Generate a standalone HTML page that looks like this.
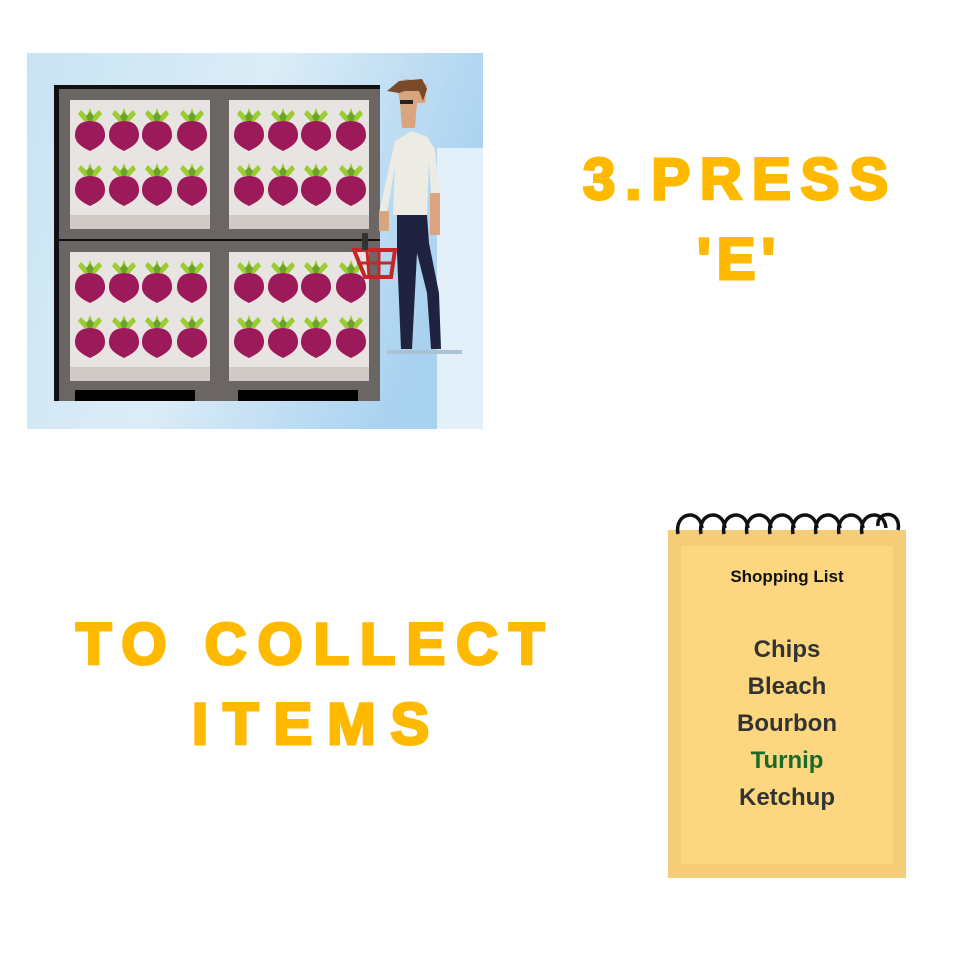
<!DOCTYPE html>
<html><head><meta charset="utf-8"><style>
html,body{margin:0;padding:0;background:#fff;width:961px;height:962px;overflow:hidden;position:relative}
.t{position:absolute;font-family:"Liberation Sans",sans-serif;font-weight:bold;color:#FFBA00;font-size:58px;line-height:58px;white-space:nowrap;-webkit-text-stroke:3px #FFBA00}
.n{position:absolute;font-family:"Liberation Sans",sans-serif;font-weight:bold;color:#333;white-space:nowrap;text-align:center;left:668px;width:238px}
</style></head><body>
<svg style="position:absolute;left:27px;top:53px" width="456" height="376" viewBox="0 0 456 376">
<defs>
<linearGradient id="bg" x1="0" y1="0" x2="1" y2="0.3"><stop offset="0" stop-color="#c8e3f3"/><stop offset="0.5" stop-color="#dcedf7"/><stop offset="1" stop-color="#a9d2f0"/></linearGradient>
<g id="beet"><path d="M-3 -18 L-9 -24 L-12 -20 L-6 -13 L6 -13 L12 -20 L9 -24 L3 -18 L0 -26Z" fill="#9acd32"/><path d="M-4 -18 L0 -22 L4 -18 L2 -13 L-2 -13Z" fill="#6aa52a"/><path d="M0 -13 C-12 -13 -15 -5 -15 1 C-15 9 -8 13 0 17 C8 13 15 9 15 1 C15 -5 12 -13 0 -13Z" fill="#9c1a5a"/></g>
<g id="cell"><rect x="0" y="0" width="162" height="150" fill="#6b6564"/><rect x="11" y="11" width="140" height="129" fill="#e8e4e1"/><rect x="11" y="126" width="140" height="14" fill="#cfcac6"/>
<use href="#beet" x="31" y="45"/><use href="#beet" x="65" y="45"/><use href="#beet" x="98" y="45"/><use href="#beet" x="133" y="45"/>
<use href="#beet" x="31" y="100"/><use href="#beet" x="65" y="100"/><use href="#beet" x="98" y="100"/><use href="#beet" x="133" y="100"/></g>
</defs>
<rect width="456" height="376" fill="url(#bg)"/>
<rect x="410" y="95" width="46" height="281" fill="#e3f0f9"/>
<rect x="27" y="32" width="326" height="316" fill="#111"/>
<use href="#cell" x="32" y="36"/><use href="#cell" x="191" y="36"/>
<use href="#cell" x="32" y="188"/><use href="#cell" x="191" y="188"/>
<rect x="32" y="336" width="162" height="12" fill="#6b6564"/><rect x="191" y="336" width="162" height="12" fill="#6b6564"/>
<rect x="48" y="337" width="120" height="11" fill="#000"/><rect x="211" y="337" width="120" height="11" fill="#000"/>
<rect x="360" y="297" width="75" height="4" fill="#a9c3d3"/>
<path d="M370 33 L378 26 L395 28 L400 32 L398 50 L390 50 L388 75 L375 75 L373 50Z" fill="#d9a57e"/>
<path d="M360 38 L372 28 L395 26 L400 36 L396 48 L392 38 L378 38 L372 40Z" fill="#7a4a2a"/>
<rect x="373" y="47" width="13" height="4" fill="#222"/>
<path d="M368 88 L385 78 L400 84 L408 96 L412 140 L404 140 L402 108 L400 162 L366 162 L368 112 L360 160 L352 160Z" fill="#ecece4"/>
<rect x="352" y="158" width="10" height="20" fill="#d9a57e"/><rect x="403" y="140" width="10" height="42" fill="#d9a57e"/>
<path d="M370 162 L400 162 L402 190 L412 240 L414 296 L404 296 L400 240 L390 200 L385 296 L374 296 L370 200Z" fill="#1f2340"/>
<path d="M327 197 L368 197 L364 224 L338 224Z" fill="none" stroke="#c0282a" stroke-width="4"/>
<path d="M340 197 L342 224 M352 197 L352 224 M330 210 L366 210" stroke="#c0282a" stroke-width="3"/>
<rect x="335" y="180" width="6" height="17" fill="#333"/>
</svg>
<div class="t" style="left:583px;top:151px;letter-spacing:10px">3.PRESS</div>
<div class="t" style="left:697px;top:231px;letter-spacing:6px">'E'</div>
<div class="t" style="left:76px;top:616px;letter-spacing:11px">TO COLLECT</div>
<div class="t" style="left:192px;top:696px;letter-spacing:15px">ITEMS</div>
<div style="position:absolute;left:668px;top:530px;width:238px;height:348px;background:#f5cd78"></div>
<div style="position:absolute;left:681px;top:546px;width:212px;height:318px;background:#fdd780"></div>
<svg style="position:absolute;left:672px;top:506px" width="232" height="34" viewBox="0 0 232 34">
<g fill="none" stroke="#111" stroke-width="3.5">
<path d="M6 28 C2 6 28 2 30 22"/><path d="M29 28 C25 6 51 2 53 22"/><path d="M52 28 C48 6 74 2 76 22"/><path d="M75 28 C71 6 97 2 99 22"/><path d="M98 28 C94 6 120 2 122 22"/><path d="M121 28 C117 6 143 2 145 22"/><path d="M144 28 C140 6 166 2 168 22"/><path d="M167 28 C163 6 189 2 191 22"/><path d="M190 28 C186 6 212 2 214 22"/><path d="M206 20 C204 4 230 4 226 24"/>
</g></svg>
<div class="n" style="top:567px;font-size:17px;color:#111">Shopping List</div>
<div class="n" style="top:636px;font-size:24px">Chips</div>
<div class="n" style="top:673px;font-size:24px">Bleach</div>
<div class="n" style="top:710px;font-size:24px">Bourbon</div>
<div class="n" style="top:747px;font-size:24px;color:#1a6b2a">Turnip</div>
<div class="n" style="top:784px;font-size:24px">Ketchup</div>
</body></html>
